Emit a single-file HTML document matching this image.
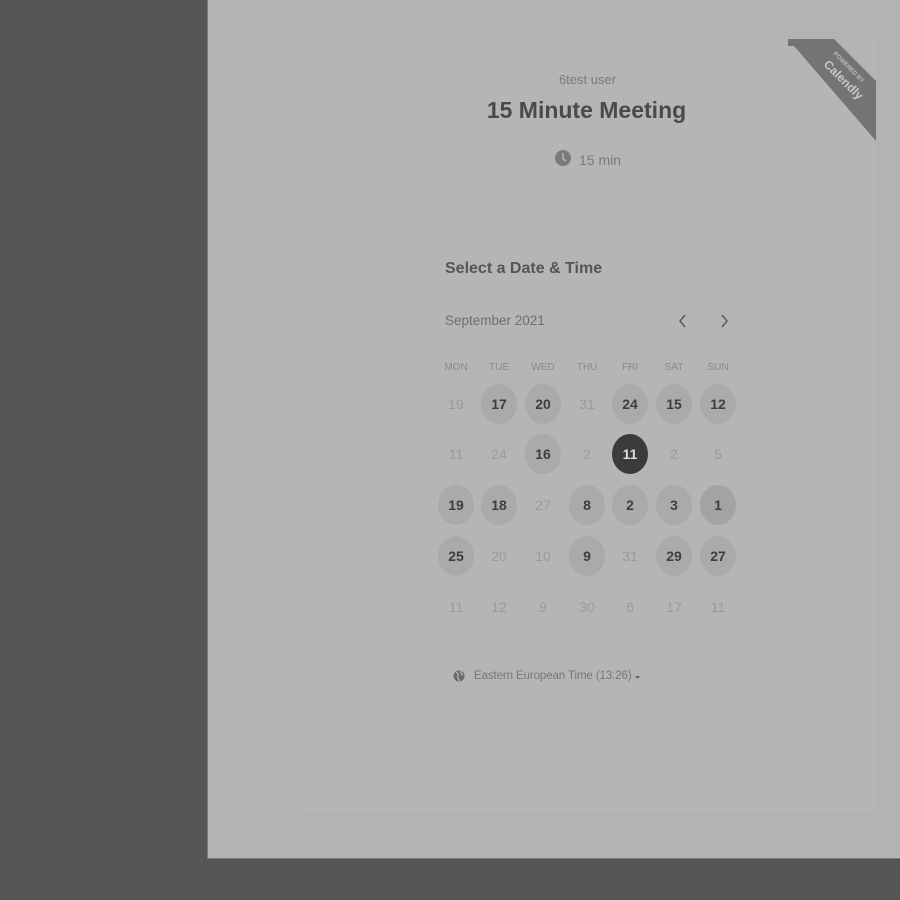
<!DOCTYPE html>
<html><head><meta charset="utf-8"><style>
*{margin:0;padding:0;box-sizing:border-box}
body{width:900px;height:900px;background:#555;position:relative;overflow:hidden;font-family:"Liberation Sans",sans-serif}
.panel{position:absolute;left:207px;top:0;width:693px;height:859px;background:#b3b3b3;border-left:1px solid #7a7a7a;border-bottom:1px solid #7a7a7a}
.card{position:absolute;left:302px;top:40px;width:574px;height:772px;background:#b5b5b5}
.t{position:absolute;white-space:nowrap}
.c{position:absolute;width:36px;height:40px;border-radius:50%;text-align:center;line-height:40px;font-size:14px}
.a{background:#aaaaaa;color:#3e3e3e;font-weight:bold}
.d{color:#9a9a9a}
.s{background:#3b3b3b;color:#ddd;font-weight:bold}
.h{position:absolute;width:40px;text-align:center;font-size:10px;color:#8a8a8a;top:362px}
</style></head><body>
<div class="panel"></div>
<div class="card"></div>
<svg style="position:absolute;left:0;top:0" width="900" height="900">
<polygon points="788,39 834,39 876,81 876,141 870,134 794,46 788,46" fill="#747474"/>
<text x="0" y="0" transform="translate(833,54) rotate(45)" font-family="Liberation Sans" font-size="6" font-weight="bold" fill="#bdbdbd">POWERED BY</text>
<text x="0" y="0" transform="translate(823,65) rotate(45)" font-family="Liberation Sans" font-size="12" font-weight="bold" fill="#c8c8c8">Calendly</text>
<circle cx="563" cy="158" r="8" fill="#7a7a7a"/>
<path d="M563 153v5.5l3 2.5" stroke="#b5b5b5" stroke-width="1.6" fill="none"/>
<path d="M685 315l-5 6 5 6M722 315l5 6-5 6" stroke="#5a5a5a" stroke-width="1.5" fill="none"/>
<circle cx="459" cy="676" r="5.5" fill="#6a6a6a"/>
<path d="M456 672q3 2 2 4t2 5M461 671q-1 3 2 4" stroke="#b5b5b5" stroke-width="1.3" fill="none"/>
<path d="M635 676h5l-2.5 3z" fill="#666"/>
</svg>
<div class="t" style="left:0;width:1175px;text-align:center;top:72px;font-size:13px;color:#7a7a7a">6test user</div>
<div class="t" style="left:0;width:1173px;text-align:center;top:97px;font-size:23px;font-weight:bold;color:#4a4a4a">15 Minute Meeting</div>
<div class="t" style="left:579px;top:152px;font-size:14px;color:#7a7a7a">15 min</div>
<div class="t" style="left:445px;top:260px;font-size:16px;font-weight:bold;color:#555">Select a Date &amp; Time</div>
<div class="t" style="left:445px;top:313px;font-size:13.5px;color:#6e6e6e">September 2021</div>
<div class="t" style="left:474px;top:670px;font-size:11.5px;color:#777;letter-spacing:-0.1px">Eastern European Time (13:26)</div>
<div class="h" style="left:436px">MON</div><div class="h" style="left:479px">TUE</div><div class="h" style="left:523px">WED</div><div class="h" style="left:567px">THU</div><div class="h" style="left:610px">FRI</div><div class="h" style="left:654px">SAT</div><div class="h" style="left:698px">SUN</div>
<div id="g"></div>
<script>
var xs=[456,499,543,587,630,674,718],ys=[404,454,505,556,607];
var r=[["19d","17a","20a","31d","24a","15a","12a"],["11d","24d","16a","2d","11s","2d","5d"],["19a","18a","27d","8a","2a","3a","1a"],["25a","20d","10d","9a","31d","29a","27a"],["11d","12d","9d","30d","6d","17d","11d"]];
var h="";for(var i=0;i<5;i++)for(var j=0;j<7;j++){var v=r[i][j],k=v.slice(-1),n=v.slice(0,-1);var st="left:"+(xs[j]-18)+"px;top:"+(ys[i]-20)+"px";if(i==2&&j==6)st+=";background:#a3a3a3";h+='<div class="c '+k+'" style="'+st+'">'+n+'</div>';}
document.getElementById("g").innerHTML=h;
</script>
</body></html>
